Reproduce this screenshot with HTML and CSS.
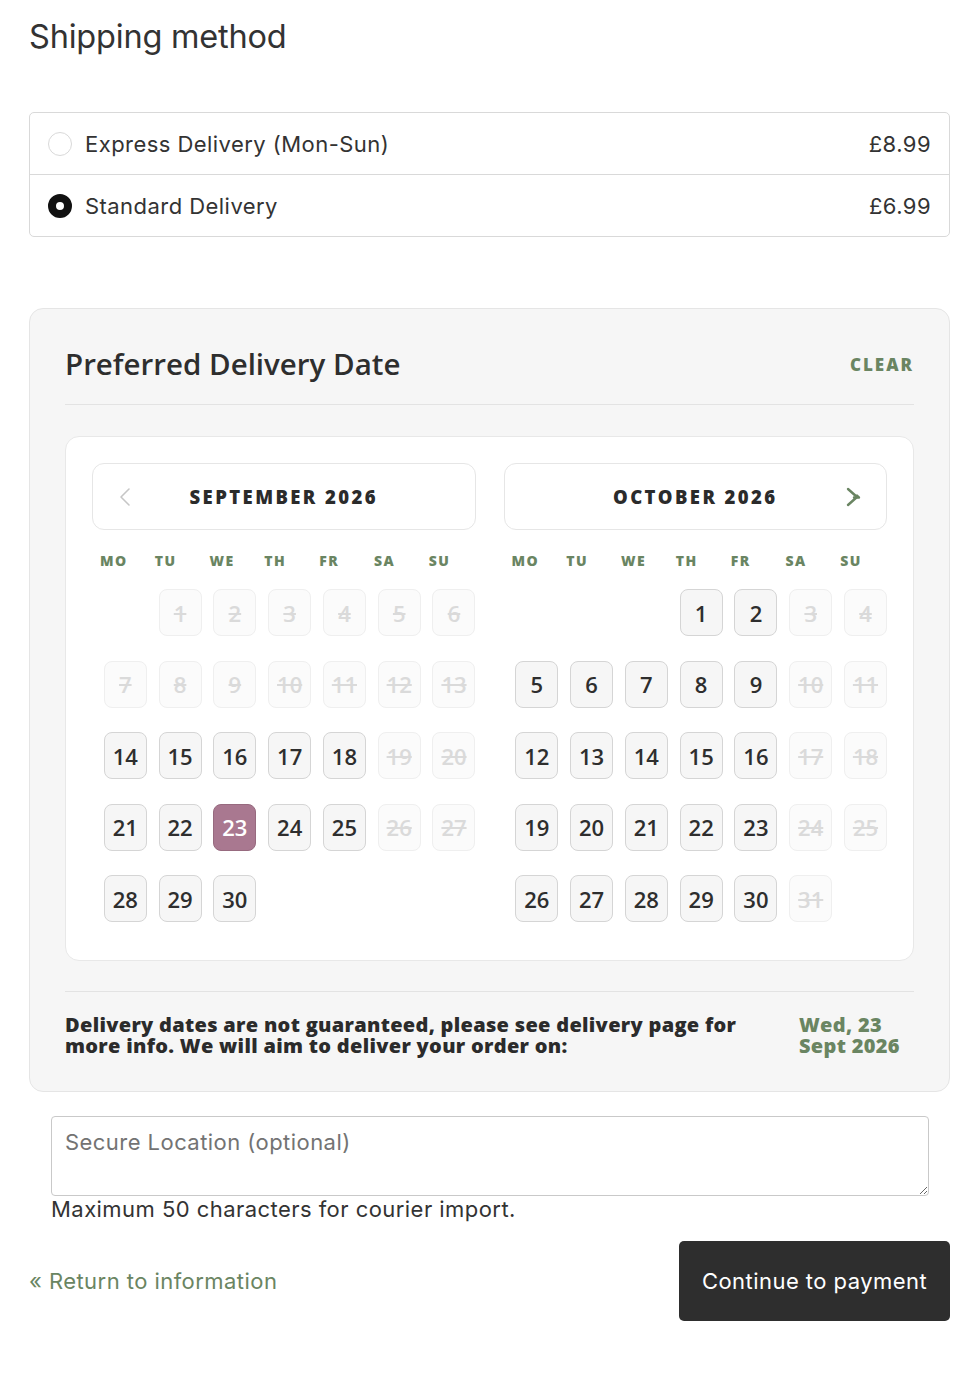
FILE: index.html
```html
<!DOCTYPE html>
<html lang="en">
<head>
<meta charset="UTF-8" />
<meta name="viewport" content="width=device-width, initial-scale=1" />
<title>Shipping method</title>
<link rel="stylesheet" href="styles.css">
</head>
<body>
  <main class="page">
    <h1 class="page-title">Shipping method</h1>

    <div class="methods">
      <label class="method">
        <span class="radio"></span>
        <span class="method-name">Express Delivery (Mon-Sun)</span>
        <span class="method-price">£8.99</span>
      </label>
      <label class="method">
        <span class="radio checked"></span>
        <span class="method-name">Standard Delivery</span>
        <span class="method-price">£6.99</span>
      </label>
    </div>

    <section class="date-panel">
      <div class="date-head">
        <h2 class="date-title">Preferred Delivery Date</h2>
        <button class="clear-btn">CLEAR</button>
      </div>

      <div class="calendar">
        <!-- September -->
        <div class="month">
          <div class="month-head">
            <svg class="arrow prev" viewBox="0 0 14 20"><path d="M11 2L3 10l8 8" /></svg>
            <span class="month-name">SEPTEMBER 2026</span>
            <span></span>
          </div>
          <div class="weekdays">
            <span>MO</span><span>TU</span><span>WE</span><span>TH</span><span>FR</span><span>SA</span><span>SU</span>
          </div>
          <div class="days">
            <span class="day off" style="grid-column-start: 2">1</span>
            <span class="day off">2</span>
            <span class="day off">3</span>
            <span class="day off">4</span>
            <span class="day off">5</span>
            <span class="day off">6</span>
            <span class="day off">7</span>
            <span class="day off">8</span>
            <span class="day off">9</span>
            <span class="day off">10</span>
            <span class="day off">11</span>
            <span class="day off">12</span>
            <span class="day off">13</span>
            <span class="day">14</span>
            <span class="day">15</span>
            <span class="day">16</span>
            <span class="day">17</span>
            <span class="day">18</span>
            <span class="day off">19</span>
            <span class="day off">20</span>
            <span class="day">21</span>
            <span class="day">22</span>
            <span class="day selected">23</span>
            <span class="day">24</span>
            <span class="day">25</span>
            <span class="day off">26</span>
            <span class="day off">27</span>
            <span class="day">28</span>
            <span class="day">29</span>
            <span class="day">30</span>
          </div>
        </div>

        <!-- October -->
        <div class="month">
          <div class="month-head">
            <span></span>
            <span class="month-name">OCTOBER 2026</span>
            <svg class="arrow next" viewBox="0 0 20 20"><path d="M4 2l9 8-9 8" /><path d="M10 10.5h5M13 8.5l2 2" /></svg>
          </div>
          <div class="weekdays">
            <span>MO</span><span>TU</span><span>WE</span><span>TH</span><span>FR</span><span>SA</span><span>SU</span>
          </div>
          <div class="days">
            <span class="day" style="grid-column-start: 4">1</span>
            <span class="day">2</span>
            <span class="day off">3</span>
            <span class="day off">4</span>
            <span class="day">5</span>
            <span class="day">6</span>
            <span class="day">7</span>
            <span class="day">8</span>
            <span class="day">9</span>
            <span class="day off">10</span>
            <span class="day off">11</span>
            <span class="day">12</span>
            <span class="day">13</span>
            <span class="day">14</span>
            <span class="day">15</span>
            <span class="day">16</span>
            <span class="day off">17</span>
            <span class="day off">18</span>
            <span class="day">19</span>
            <span class="day">20</span>
            <span class="day">21</span>
            <span class="day">22</span>
            <span class="day">23</span>
            <span class="day off">24</span>
            <span class="day off">25</span>
            <span class="day">26</span>
            <span class="day">27</span>
            <span class="day">28</span>
            <span class="day">29</span>
            <span class="day">30</span>
            <span class="day off">31</span>
          </div>
        </div>
      </div>

      <div class="date-note">
        <p class="note-text">Delivery dates are not guaranteed, please see delivery page for more info. We will aim to deliver your order on:</p>
        <p class="note-date">Wed, 23 Sept 2026</p>
      </div>
    </section>

    <div class="secure">
      <textarea class="secure-input" placeholder="Secure Location (optional)"></textarea>
      <p class="secure-hint">Maximum 50 characters for courier import.</p>
    </div>

    <div class="actions">
      <a class="back-link" href="#">« Return to information</a>
      <button class="continue-btn">Continue to payment</button>
    </div>
  </main>
</body>
</html>
```

FILE: styles.css
```css
:root {
  --text: #333;
  --green: #6a8562;
  --mauve: #a97890;
  --border: #d9d9d9;
  --cal-font: "Open Sans", "DejaVu Sans", sans-serif;
}

body {
  margin: 0;
  background: #fff;
  color: var(--text);
  font-family: Inter, "Liberation Sans", sans-serif;
}

.page {
  padding: 0 29px 60px 29px;
}

.page-title {
  margin: 18px 0 56px;
  font-size: 32.5px;
  font-weight: 400;
  line-height: 38px;
  letter-spacing: -0.2px;
}

/* shipping options */
.methods {
  border: 1px solid var(--border);
  border-radius: 5px;
}
.method {
  display: flex;
  align-items: center;
  height: 61px;
  padding: 0 18px;
  font-size: 22px;
  letter-spacing: 0.45px;
}
.method + .method {
  border-top: 1px solid var(--border);
}
.radio {
  width: 24px;
  height: 24px;
  box-sizing: border-box;
  border: 1px solid var(--border);
  border-radius: 50%;
  background: #fff;
  flex-shrink: 0;
}
.radio.checked {
  border: 8.5px solid #111;
}
.method-name {
  margin-left: 13px;
}
.method-price {
  margin-left: auto;
}

/* delivery date panel */
.date-panel {
  margin-top: 71px;
  padding: 0 35px;
  background: #f6f6f6;
  border: 1px solid #e5e5e5;
  border-radius: 14px;
  font-family: var(--cal-font);
}
.date-head {
  display: flex;
  align-items: center;
  justify-content: space-between;
  padding: 36px 0 21px;
  border-bottom: 1px solid #e3e3e3;
}
.date-title {
  margin: 0;
  font-size: 29.5px;
  font-weight: 600;
  line-height: 38px;
  color: #2e2e2e;
}
.clear-btn {
  border: none;
  background: none;
  padding: 0;
  font-family: var(--cal-font);
  font-size: 17px;
  font-weight: 800;
  letter-spacing: 2px;
  color: var(--green);
  cursor: pointer;
}

.calendar {
  margin-top: 31px;
  display: grid;
  grid-template-columns: 1fr 1fr;
  gap: 28px;
  padding: 26px 26px 38px;
  background: #fff;
  border: 1px solid #e8e8e8;
  border-radius: 14px;
}
.month-head {
  display: grid;
  grid-template-columns: 1fr auto 1fr;
  align-items: center;
  height: 67px;
  box-sizing: border-box;
  padding: 0 22px;
  border: 1px solid #e6e6e6;
  border-radius: 12px;
}
.month-name {
  font-size: 18.5px;
  font-weight: 800;
  letter-spacing: 2.4px;
  color: #2b2b2b;
}
.arrow {
  width: 20px;
  height: 20px;
  fill: none;
  stroke-linecap: round;
  stroke-linejoin: round;
}
.arrow.prev {
  justify-self: start;
  stroke: #c6c6c6;
  stroke-width: 1.6;
}
.arrow.next {
  justify-self: end;
  stroke: var(--green);
  stroke-width: 2.4;
}

.weekdays {
  display: grid;
  grid-template-columns: repeat(7, 1fr);
  margin-top: 20px;
  line-height: 22px;
  font-size: 14px;
  font-weight: 800;
  letter-spacing: 1.5px;
  color: var(--green);
}
.weekdays span {
  padding-left: 8px;
}

.days {
  display: grid;
  grid-template-columns: repeat(7, 1fr);
  row-gap: 24.5px;
  margin-top: 17px;
}
.day {
  justify-self: end;
  display: flex;
  align-items: center;
  justify-content: center;
  width: 43px;
  height: 47px;
  box-sizing: border-box;
  border: 1.5px solid #d5d5d5;
  border-radius: 8px;
  background: #f6f6f6;
  font-size: 22px;
  font-weight: 600;
  color: #2e2e2e;
}
.day.off {
  background: #fbfbfb;
  border-color: #efefef;
  color: #dadada;
  text-decoration: line-through;
}
.day.selected {
  background: var(--mauve);
  border-color: #976a7f;
  color: #fff;
}

.date-note {
  display: flex;
  gap: 50px;
  margin-top: 30px;
  padding: 22px 0 35px;
  border-top: 1px solid #e3e3e3;
}
.note-text,
.note-date {
  margin: 0;
  font-size: 20px;
  font-weight: 800;
  line-height: 21px;
  letter-spacing: 0.3px;
}
.note-text {
  flex: 1;
  color: #2b2b2b;
}
.note-date {
  width: 115px;
  flex-shrink: 0;
  color: var(--green);
}

/* secure location */
.secure {
  margin: 24px 21px 0 22px;
}
.secure-input {
  display: block;
  width: 100%;
  height: 80px;
  box-sizing: border-box;
  padding: 12px 13px;
  border: 1px solid #c9c9c9;
  border-radius: 4px;
  font-family: Inter, "Liberation Sans", sans-serif;
  font-size: 22px;
  letter-spacing: 0.45px;
  line-height: 26px;
  color: var(--text);
}
.secure-input::placeholder {
  color: #737373;
}
.secure-hint {
  margin: 0;
  font-size: 22px;
  letter-spacing: 0.45px;
  line-height: 26px;
}

.actions {
  display: flex;
  align-items: center;
  justify-content: space-between;
  margin-top: 19px;
}
.back-link {
  font-size: 22px;
  letter-spacing: 0.45px;
  color: var(--green);
  text-decoration: none;
}
.continue-btn {
  width: 271px;
  height: 80px;
  border: none;
  border-radius: 5px;
  background: #2e2e2e;
  color: #fff;
  font-family: Inter, "Liberation Sans", sans-serif;
  font-size: 22px;
  letter-spacing: 0.45px;
  cursor: pointer;
}
```
